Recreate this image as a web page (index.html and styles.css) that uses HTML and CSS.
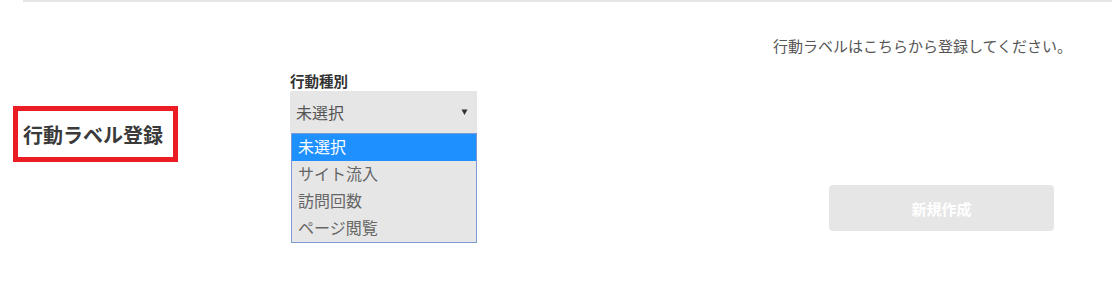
FILE: index.html
```html
<!DOCTYPE html>
<html lang="ja">
<head>
<meta charset="utf-8">
<title>行動ラベル登録</title>
<link rel="stylesheet" href="styles.css">
</head>
<body>
<div class="top-line"></div>
<div class="row">
  <h2 class="title">行動ラベル登録</h2>
  <div class="form">
    <div class="label">行動種別</div>
    <div class="select">
      <span class="select-value">未選択</span>
      <svg class="arrow" width="7" height="7" viewBox="0 0 7 7"><polygon points="0.5,0.5 6.5,0.5 3.5,6" fill="#333"/></svg>
    </div>
    <ul class="options">
      <li class="option selected">未選択</li>
      <li class="option">サイト流入</li>
      <li class="option">訪問回数</li>
      <li class="option">ページ閲覧</li>
    </ul>
  </div>
  <div class="side">
    <p class="hint">行動ラベルはこちらから登録してください。</p>
    <button class="btn" type="button">新規作成</button>
  </div>
</div>
</body>
</html>
```
FILE: styles.css
```css
* { box-sizing: border-box; }
html, body { margin: 0; padding: 0; background: #fff; }
body {
  font-family: "Noto Sans CJK JP", "Noto Sans", sans-serif;
  color: #333;
  width: 1112px;
  height: 286px;
  overflow: hidden;
}
.top-line {
  margin-left: 23px;
  height: 2px;
  background: #e6e6e6;
}
.row {
  display: flex;
  align-items: flex-start;
}
.title {
  margin: 104px 0 0 13px;
  width: 165px;
  height: 56px;
  border: 5px solid #ec1c24;
  padding: 0 0 0 5px;
  font-size: 20px;
  font-weight: bold;
  line-height: 47px;
  color: #3a3a3a;
  white-space: nowrap;
}
.form {
  margin: 69px 0 0 112px;
  width: 187px;
}
.label {
  font-size: 14.5px;
  font-weight: bold;
  line-height: 20px;
  color: #333;
}
.select {
  height: 42px;
  background: #e6e6e6;
  display: flex;
  align-items: center;
  justify-content: space-between;
  padding: 0 9px 0 6px;
}
.select-value {
  font-size: 16px;
  color: #555;
  line-height: 20px;
}
.arrow { display: block; margin-top: 1px; }
.options {
  list-style: none;
  margin: 0 0 0 1px;
  padding: 0;
  width: 186px;
  border: 1px solid #7b9bd2;
  background: #e6e6e6;
}
.option {
  height: 27px;
  line-height: 25px;
  padding-left: 6px;
  font-size: 16px;
  color: #666;
}
.option.selected {
  background: #1e90ff;
  color: #fff;
}
.side {
  margin: 33px 0 0 296px;
  width: 310px;
}
.hint {
  margin: 0;
  font-size: 15px;
  line-height: 22px;
  color: #555;
  white-space: nowrap;
}
.btn {
  display: block;
  margin: 128px 0 0 56px;
  width: 225px;
  height: 46px;
  border: none;
  border-radius: 4px;
  background: #e6e6e6;
  color: #fff;
  font-family: "Noto Sans CJK JP", "Noto Sans", sans-serif;
  font-size: 15px;
  font-weight: bold;
  padding: 0;
}
```
